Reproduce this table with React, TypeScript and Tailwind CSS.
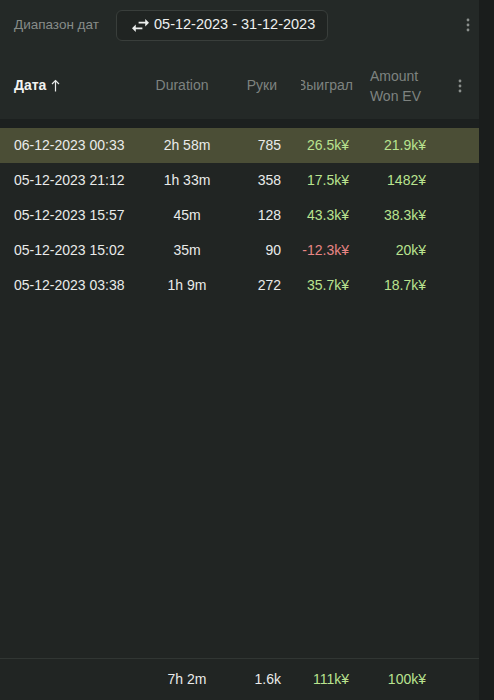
import React from "react";

interface Session {
  date: string;
  duration: string;
  hands: string;
  won: string;
  ev: string;
  negative?: boolean;
}

const sessions: Session[] = [
  { date: "06-12-2023 00:33", duration: "2h 58m", hands: "785", won: "26.5k¥", ev: "21.9k¥" },
  { date: "05-12-2023 21:12", duration: "1h 33m", hands: "358", won: "17.5k¥", ev: "1482¥" },
  { date: "05-12-2023 15:57", duration: "45m", hands: "128", won: "43.3k¥", ev: "38.3k¥" },
  { date: "05-12-2023 15:02", duration: "35m", hands: "90", won: "-12.3k¥", ev: "20k¥", negative: true },
  { date: "05-12-2023 03:38", duration: "1h 9m", hands: "272", won: "35.7k¥", ev: "18.7k¥" },
];

const cols = "grid grid-cols-[140px_94px_47px_68px_77px_53px] items-center";

function Kebab() {
  return (
    <svg width="4" height="14" viewBox="0 0 4 14" fill="#8a8f8c">
      <circle cx="2" cy="2" r="1.4" />
      <circle cx="2" cy="7" r="1.4" />
      <circle cx="2" cy="12" r="1.4" />
    </svg>
  );
}

function SwapIcon() {
  return (
    <svg width="17" height="17" viewBox="3 4 18 16" fill="#eceeed">
      <path d="M6.99 11L3 15l3.99 4v-3H14v-2H6.99v-3zM21 9l-3.99-4v3H10v2h7.01v3L21 9z" />
    </svg>
  );
}

function SortUp() {
  return (
    <svg width="9" height="13" viewBox="0 0 9 13" fill="none" stroke="#e8eae9" strokeWidth="1.2">
      <path d="M4.5 12.5V1.5" />
      <path d="M1 5l3.5-3.5L8 5" />
    </svg>
  );
}

export default function App() {
  return (
    <div
      className="flex h-[700px] w-[494px] bg-[#1a1d1c] text-[14px] text-[#e9ebea]"
      style={{ fontFamily: '"Liberation Sans", Arial, sans-serif' }}
    >
      <div className="flex w-[479px] flex-col bg-[#212523]">
        {/* top bar */}
        <div className="bg-[#242927]">
          <div className="flex h-[50px] items-center pl-[14px] pr-[9px]">
            <span className="w-[102px] text-[13.5px] text-[#878c89]">Диапазон дат</span>
            <button className="flex h-[31px] w-[212px] items-center gap-[5px] rounded-md border border-[#393e3b] bg-[#202422] pl-[15px] text-[14.5px] text-[#eef0ef]">
              <SwapIcon />
              <span>05-12-2023 - 31-12-2023</span>
            </button>
            <div className="ml-auto">
              <Kebab />
            </div>
          </div>

          {/* table header */}
          <div className={`${cols} h-[69px] pt-[2px] text-[#7e8380]`}>
            <div className="flex items-center gap-[5px] pl-[14px] font-bold text-[#f2f3f2]">
              <span>Дата</span>
              <SortUp />
            </div>
            <div className="pr-[10px] text-center">Duration</div>
            <div className="pr-[4px] text-right">Руки</div>
            <div className="-mr-[4px] ml-[20px] flex justify-end overflow-hidden whitespace-nowrap">
              <span>Выиграл</span>
            </div>
            <div className="flex justify-end pr-[5px]">
              <div className="leading-[20px]">
                Amount
                <br />
                Won EV
              </div>
            </div>
            <div className="flex justify-end pr-[17px]">
              <Kebab />
            </div>
          </div>
        </div>
        <div className="h-[9px] bg-[#1c201f]" />

        {/* rows */}
        <div className="flex-1">
          {sessions.map((s, i) => (
            <div key={s.date} className={`${cols} h-[35px] ${i === 0 ? "bg-[#4b4e36]" : ""}`}>
              <div className="pl-[14px]">{s.date}</div>
              <div className="text-center">{s.duration}</div>
              <div className="text-right">{s.hands}</div>
              <div className={`text-right ${s.negative ? "text-[#e88585]" : "text-[#b9e38f]"}`}>{s.won}</div>
              <div className="text-right text-[#b9e38f]">{s.ev}</div>
              <div />
            </div>
          ))}
        </div>

        {/* totals */}
        <div className={`${cols} h-[42px] border-t border-[#313633]`}>
          <div />
          <div className="text-center">7h 2m</div>
          <div className="text-right">1.6k</div>
          <div className="text-right text-[#b9e38f]">111k¥</div>
          <div className="text-right text-[#b9e38f]">100k¥</div>
          <div />
        </div>
      </div>
    </div>
  );
}
